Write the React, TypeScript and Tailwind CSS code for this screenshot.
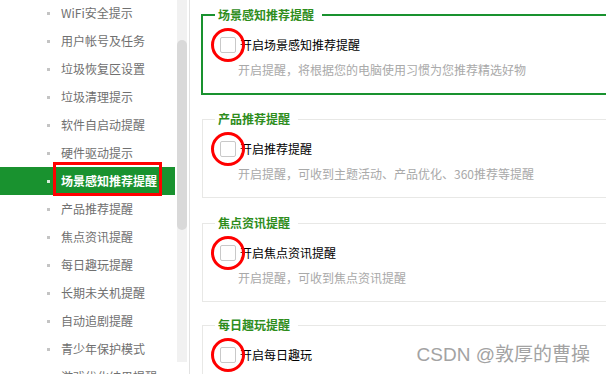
import React from "react";

const menu = [
  "WiFi安全提示",
  "用户帐号及任务",
  "垃圾恢复区设置",
  "垃圾清理提示",
  "软件自启动提醒",
  "硬件驱动提示",
  "场景感知推荐提醒",
  "产品推荐提醒",
  "焦点资讯提醒",
  "每日趣玩提醒",
  "长期未关机提醒",
  "自动追剧提醒",
  "青少年保护模式",
  "游戏优化结果提醒",
];

const groups = [
  {
    title: "场景感知推荐提醒",
    label: "开启场景感知推荐提醒",
    desc: "开启提醒，将根据您的电脑使用习惯为您推荐精选好物",
    active: true,
    mt: "mt-[15px]",
  },
  {
    title: "产品推荐提醒",
    label: "开启推荐提醒",
    desc: "开启提醒，可收到主题活动、产品优化、360推荐等提醒",
    active: false,
    mt: "mt-[25px]",
  },
  {
    title: "焦点资讯提醒",
    label: "开启焦点资讯提醒",
    desc: "开启提醒，可收到焦点资讯提醒",
    active: false,
    mt: "mt-[25px]",
  },
  {
    title: "每日趣玩提醒",
    label: "开启每日趣玩",
    desc: "开启提醒，可收到每日趣玩精彩内容提醒",
    active: false,
    mt: "mt-[23px]",
  },
];

const font = { fontFamily: '"Noto Sans CJK SC", "Noto Sans", sans-serif' };

export default function App() {
  return (
    <div
      className="relative flex h-[374px] w-[606px] overflow-hidden bg-white text-[12px]"
      style={font}
    >
      {/* sidebar */}
      <div className="mt-[-1px] flex w-[175px] shrink-0 flex-col">
        {menu.map((m, i) => {
          const sel = i === 6;
          return (
            <div
              key={m}
              className={`relative flex h-[28px] shrink-0 items-center ${
                sel ? "bg-[#19922f]" : ""
              }`}
            >
              <span
                className={`ml-[47px] h-[3px] w-[3px] ${
                  sel ? "bg-[#d8ecd9]" : "bg-[#c4c4c4]"
                }`}
              />
              <span
                className={`ml-[11px] leading-[16px] ${
                  sel ? "font-bold text-white" : "text-[#707070]"
                }`}
              >
                {m}
              </span>
              {sel && (
                <span className="absolute left-[53px] top-[-5px] h-[34px] w-[109px] border-[3px] border-[#ff0000]" />
              )}
            </div>
          );
        })}
      </div>

      {/* scrollbar */}
      <div className="ml-[2px] h-[362px] w-[10px] shrink-0 bg-[#f1f1f1]">
        <div className="mt-[40px] h-[190px] w-[10px] rounded-[5px] bg-[#d9d9d9]" />
      </div>

      {/* divider */}
      <div className="ml-[2px] h-full w-px shrink-0 bg-[#e2e2e2]" />

      {/* content */}
      <div className="flex flex-col pl-[12px]">
        {groups.map((g) => (
          <div
            key={g.title}
            className={`relative h-[79px] w-[420px] shrink-0 border px-[17px] pt-[21px] ${g.mt} ${
              g.active
                ? "border-[#19922f] shadow-[0_0_0_1px_#19922f]"
                : "border-[#e8e8e6]"
            }`}
          >
            <span className="absolute left-[12px] top-[-9px] bg-white pl-[3px] pr-[8px] text-[12px] font-bold leading-[16px] text-[#2e8d1c]">
              {g.title}
            </span>
            <div className="flex h-[16px] items-center">
              <span className="relative h-[16px] w-[16px] shrink-0 rounded-[2px] border border-[#c9c9c9] bg-white">
                <span className="absolute left-[-10px] top-[-10px] h-[34px] w-[34px] rounded-full border-[3px] border-[#ff0000]" />
              </span>
              <span className="ml-[4px] leading-[16px] text-black">{g.label}</span>
            </div>
            <div className="ml-[18px] mt-[9px] leading-[16px] text-[#a9a9a9]">{g.desc}</div>
          </div>
        ))}
      </div>

      {/* watermark */}
      <div
        className="absolute right-[16px] top-[342px] text-[19px] leading-[26px] text-[#a3a3a3]"
        style={{ fontFamily: '"Liberation Sans", "Noto Sans CJK SC", sans-serif' }}
      >
        CSDN @敦厚的曹操
      </div>
    </div>
  );
}
